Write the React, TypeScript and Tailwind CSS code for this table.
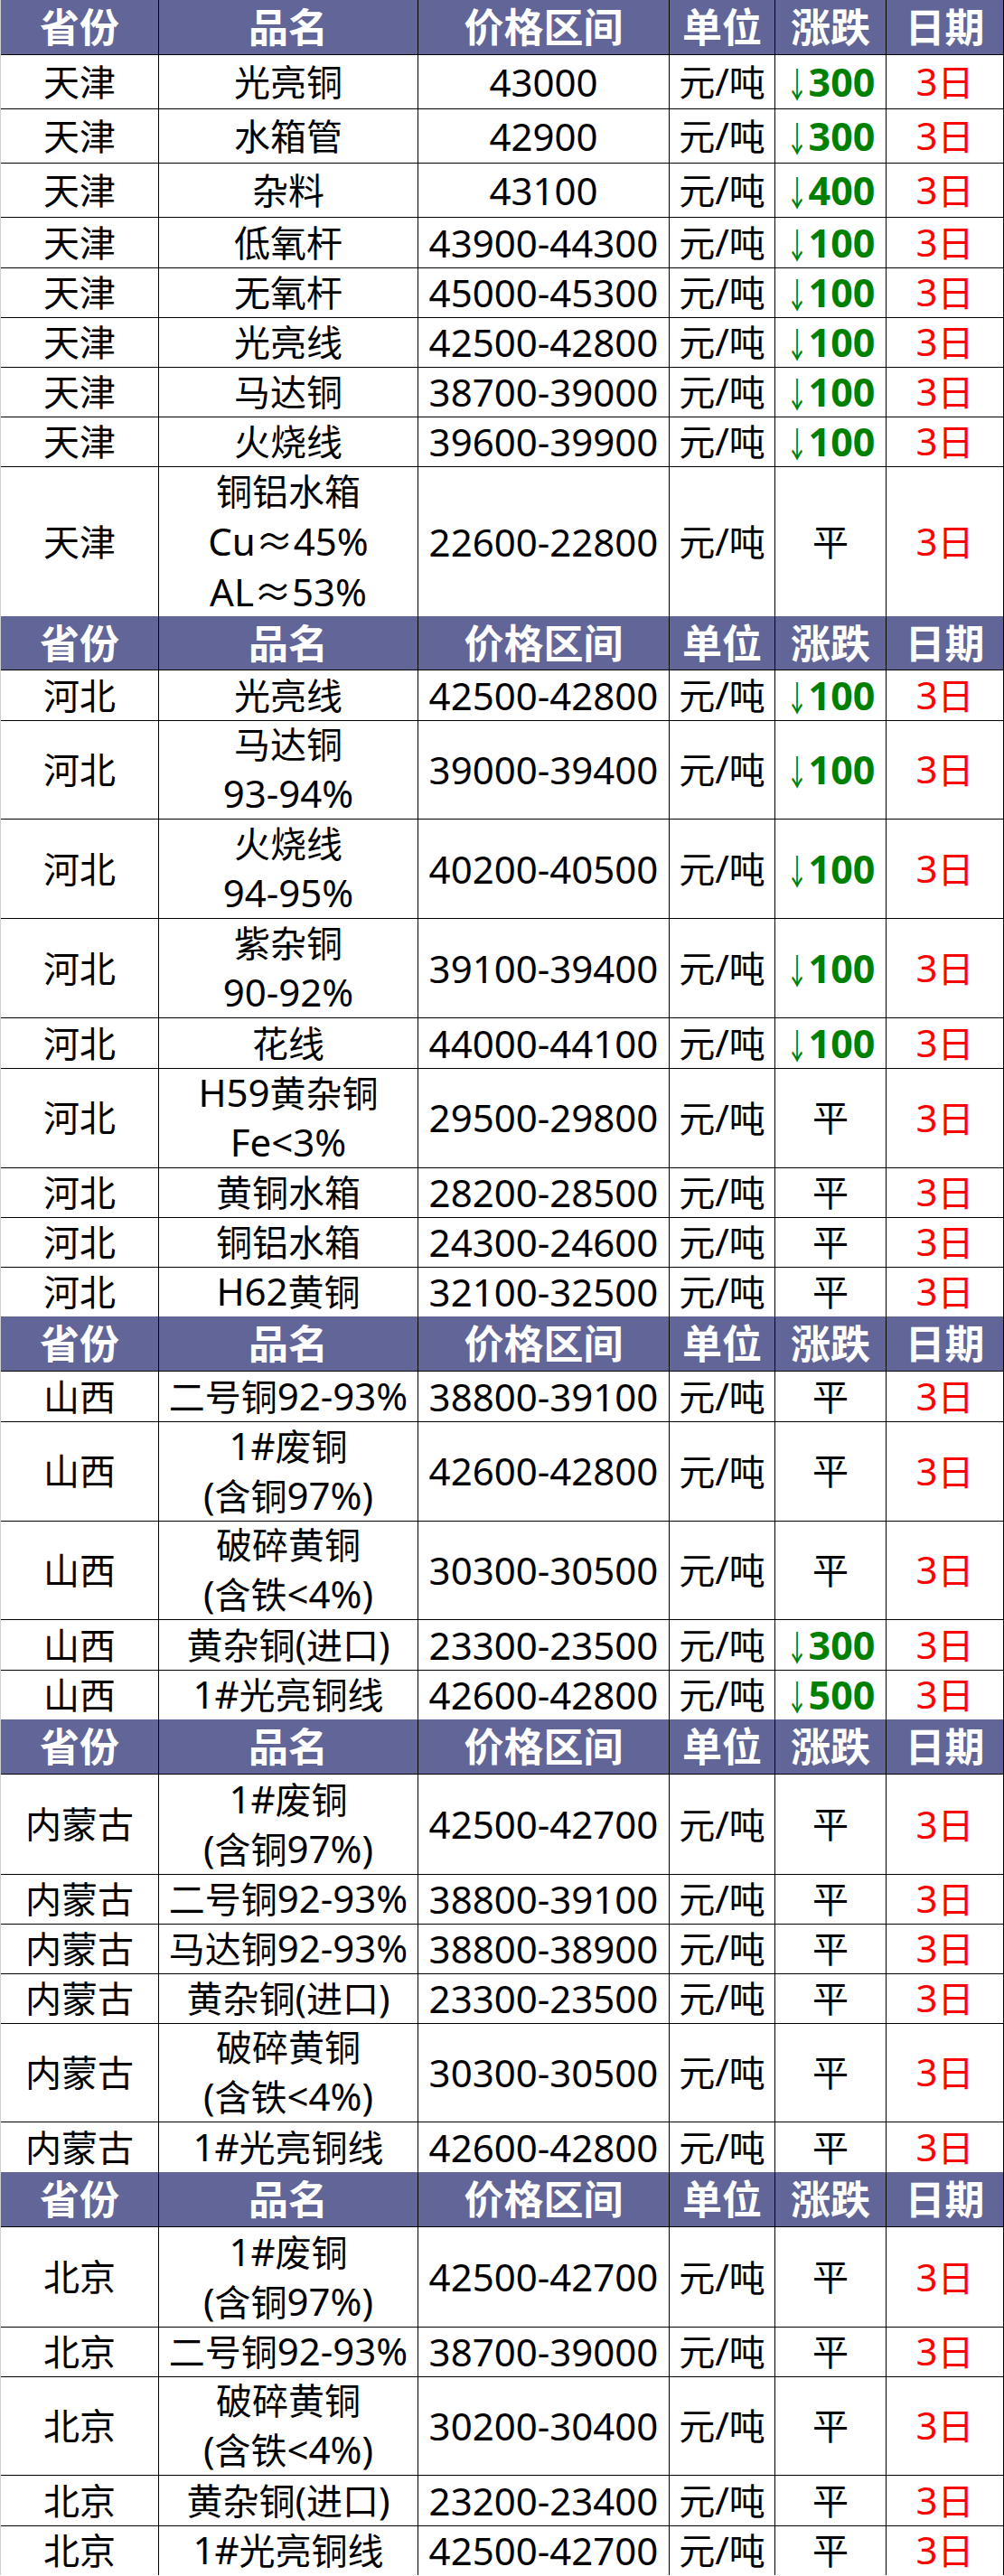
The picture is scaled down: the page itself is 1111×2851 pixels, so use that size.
import React from "react";

type Row = {
  p: string;
  name: string[];
  price: string;
  chg: string; // "平" or the size of the drop
  h: number;
};

type Section = { head: number; rows: Row[] };

const one = (p: string, name: string, price: string, chg: string, h = 55): Row => ({
  p,
  name: [name],
  price,
  chg,
  h,
});

const two = (p: string, a: string, b: string, price: string, chg: string): Row => ({
  p,
  name: [a, b],
  price,
  chg,
  h: 110,
});

const sections: Section[] = [
  {
    head: 61,
    rows: [
      one("天津", "光亮铜", "43000", "300", 60),
      one("天津", "水箱管", "42900", "300", 60),
      one("天津", "杂料", "43100", "400", 60),
      one("天津", "低氧杆", "43900-44300", "100"),
      one("天津", "无氧杆", "45000-45300", "100"),
      one("天津", "光亮线", "42500-42800", "100"),
      one("天津", "马达铜", "38700-39000", "100"),
      one("天津", "火烧线", "39600-39900", "100"),
      { p: "天津", name: ["铜铝水箱", "Cu≈45%", "AL≈53%"], price: "22600-22800", chg: "平", h: 166 },
    ],
  },
  {
    head: 60,
    rows: [
      one("河北", "光亮线", "42500-42800", "100"),
      two("河北", "马达铜", "93-94%", "39000-39400", "100"),
      two("河北", "火烧线", "94-95%", "40200-40500", "100"),
      two("河北", "紫杂铜", "90-92%", "39100-39400", "100"),
      one("河北", "花线", "44000-44100", "100"),
      two("河北", "H59黄杂铜", "Fe<3%", "29500-29800", "平"),
      one("河北", "黄铜水箱", "28200-28500", "平"),
      one("河北", "铜铝水箱", "24300-24600", "平"),
      one("河北", "H62黄铜", "32100-32500", "平"),
    ],
  },
  {
    head: 61,
    rows: [
      one("山西", "二号铜92-93%", "38800-39100", "平"),
      two("山西", "1#废铜", "(含铜97%)", "42600-42800", "平"),
      two("山西", "破碎黄铜", "(含铁<4%)", "30300-30500", "平"),
      one("山西", "黄杂铜(进口)", "23300-23500", "300"),
      one("山西", "1#光亮铜线", "42600-42800", "500"),
    ],
  },
  {
    head: 61,
    rows: [
      two("内蒙古", "1#废铜", "(含铜97%)", "42500-42700", "平"),
      one("内蒙古", "二号铜92-93%", "38800-39100", "平"),
      one("内蒙古", "马达铜92-93%", "38800-38900", "平"),
      one("内蒙古", "黄杂铜(进口)", "23300-23500", "平"),
      two("内蒙古", "破碎黄铜", "(含铁<4%)", "30300-30500", "平"),
      one("内蒙古", "1#光亮铜线", "42600-42800", "平"),
    ],
  },
  {
    head: 61,
    rows: [
      two("北京", "1#废铜", "(含铜97%)", "42500-42700", "平"),
      one("北京", "二号铜92-93%", "38700-39000", "平"),
      two("北京", "破碎黄铜", "(含铁<4%)", "30200-30400", "平"),
      one("北京", "黄杂铜(进口)", "23200-23400", "平"),
      one("北京", "1#光亮铜线", "42500-42700", "平"),
    ],
  },
];

const heads = ["省份", "品名", "价格区间", "单位", "涨跌", "日期"];

const cols = "grid grid-cols-[175px_287px_278px_117px_123px_130px]";
const cell = "flex flex-col items-center justify-center text-center border-r border-b border-black";

// latin runs sit a touch larger than the CJK ones, like YaHei does
function Mixed({ t }: { t: string }) {
  const parts = t.split(/([\u4e00-\u9fff]+)/).filter(Boolean);
  return (
    <span className="whitespace-nowrap">
      {parts.map((s, i) =>
        /[\u4e00-\u9fff]/.test(s) ? (
          <span key={i}>{s}</span>
        ) : (
          <span key={i} className="text-[42px]">
            {s}
          </span>
        )
      )}
    </span>
  );
}

function HeadRow({ h }: { h: number }) {
  return (
    <div className={cols} style={{ height: h }}>
      {heads.map((t) => (
        <div key={t} className={`${cell} bg-[#626597] text-white font-bold text-[44px] leading-[50px]`}>
          {t}
        </div>
      ))}
    </div>
  );
}

function Drop({ v }: { v: string }) {
  return (
    <span className="flex items-center whitespace-nowrap text-[#008000]">
      <span className="inline-block text-[25px] leading-none font-normal scale-y-[1.55] translate-y-[3px]">↓</span>
      <span className="font-bold text-[43px]">{v}</span>
    </span>
  );
}

function DataRow({ r }: { r: Row }) {
  return (
    <div className={`${cols} text-[40px] leading-[54px] text-black`} style={{ height: r.h }}>
      <div className={cell}>{r.p}</div>
      <div className={`${cell} ${r.name.length === 3 ? "leading-[55px]" : ""}`}>
        {r.name.map((n) => (
          <Mixed key={n} t={n} />
        ))}
      </div>
      <div className={`${cell} text-[42px]`}>{r.price}</div>
      <div className={cell}>
        <Mixed t="元/吨" />
      </div>
      <div className={cell}>{r.chg === "平" ? <span>平</span> : <Drop v={r.chg} />}</div>
      <div className={`${cell} text-[#ff0000]`}>
        <Mixed t="3日" />
      </div>
    </div>
  );
}

export default function App() {
  return (
    <div
      className="w-[1111px] bg-white border-l border-[#cfcfcf]"
      style={{ fontFamily: '"Noto Sans", "Noto Sans CJK SC", sans-serif' }}
    >
      {sections.map((s, i) => (
        <div key={i}>
          <HeadRow h={s.head} />
          {s.rows.map((r, j) => (
            <DataRow key={j} r={r} />
          ))}
        </div>
      ))}
    </div>
  );
}
